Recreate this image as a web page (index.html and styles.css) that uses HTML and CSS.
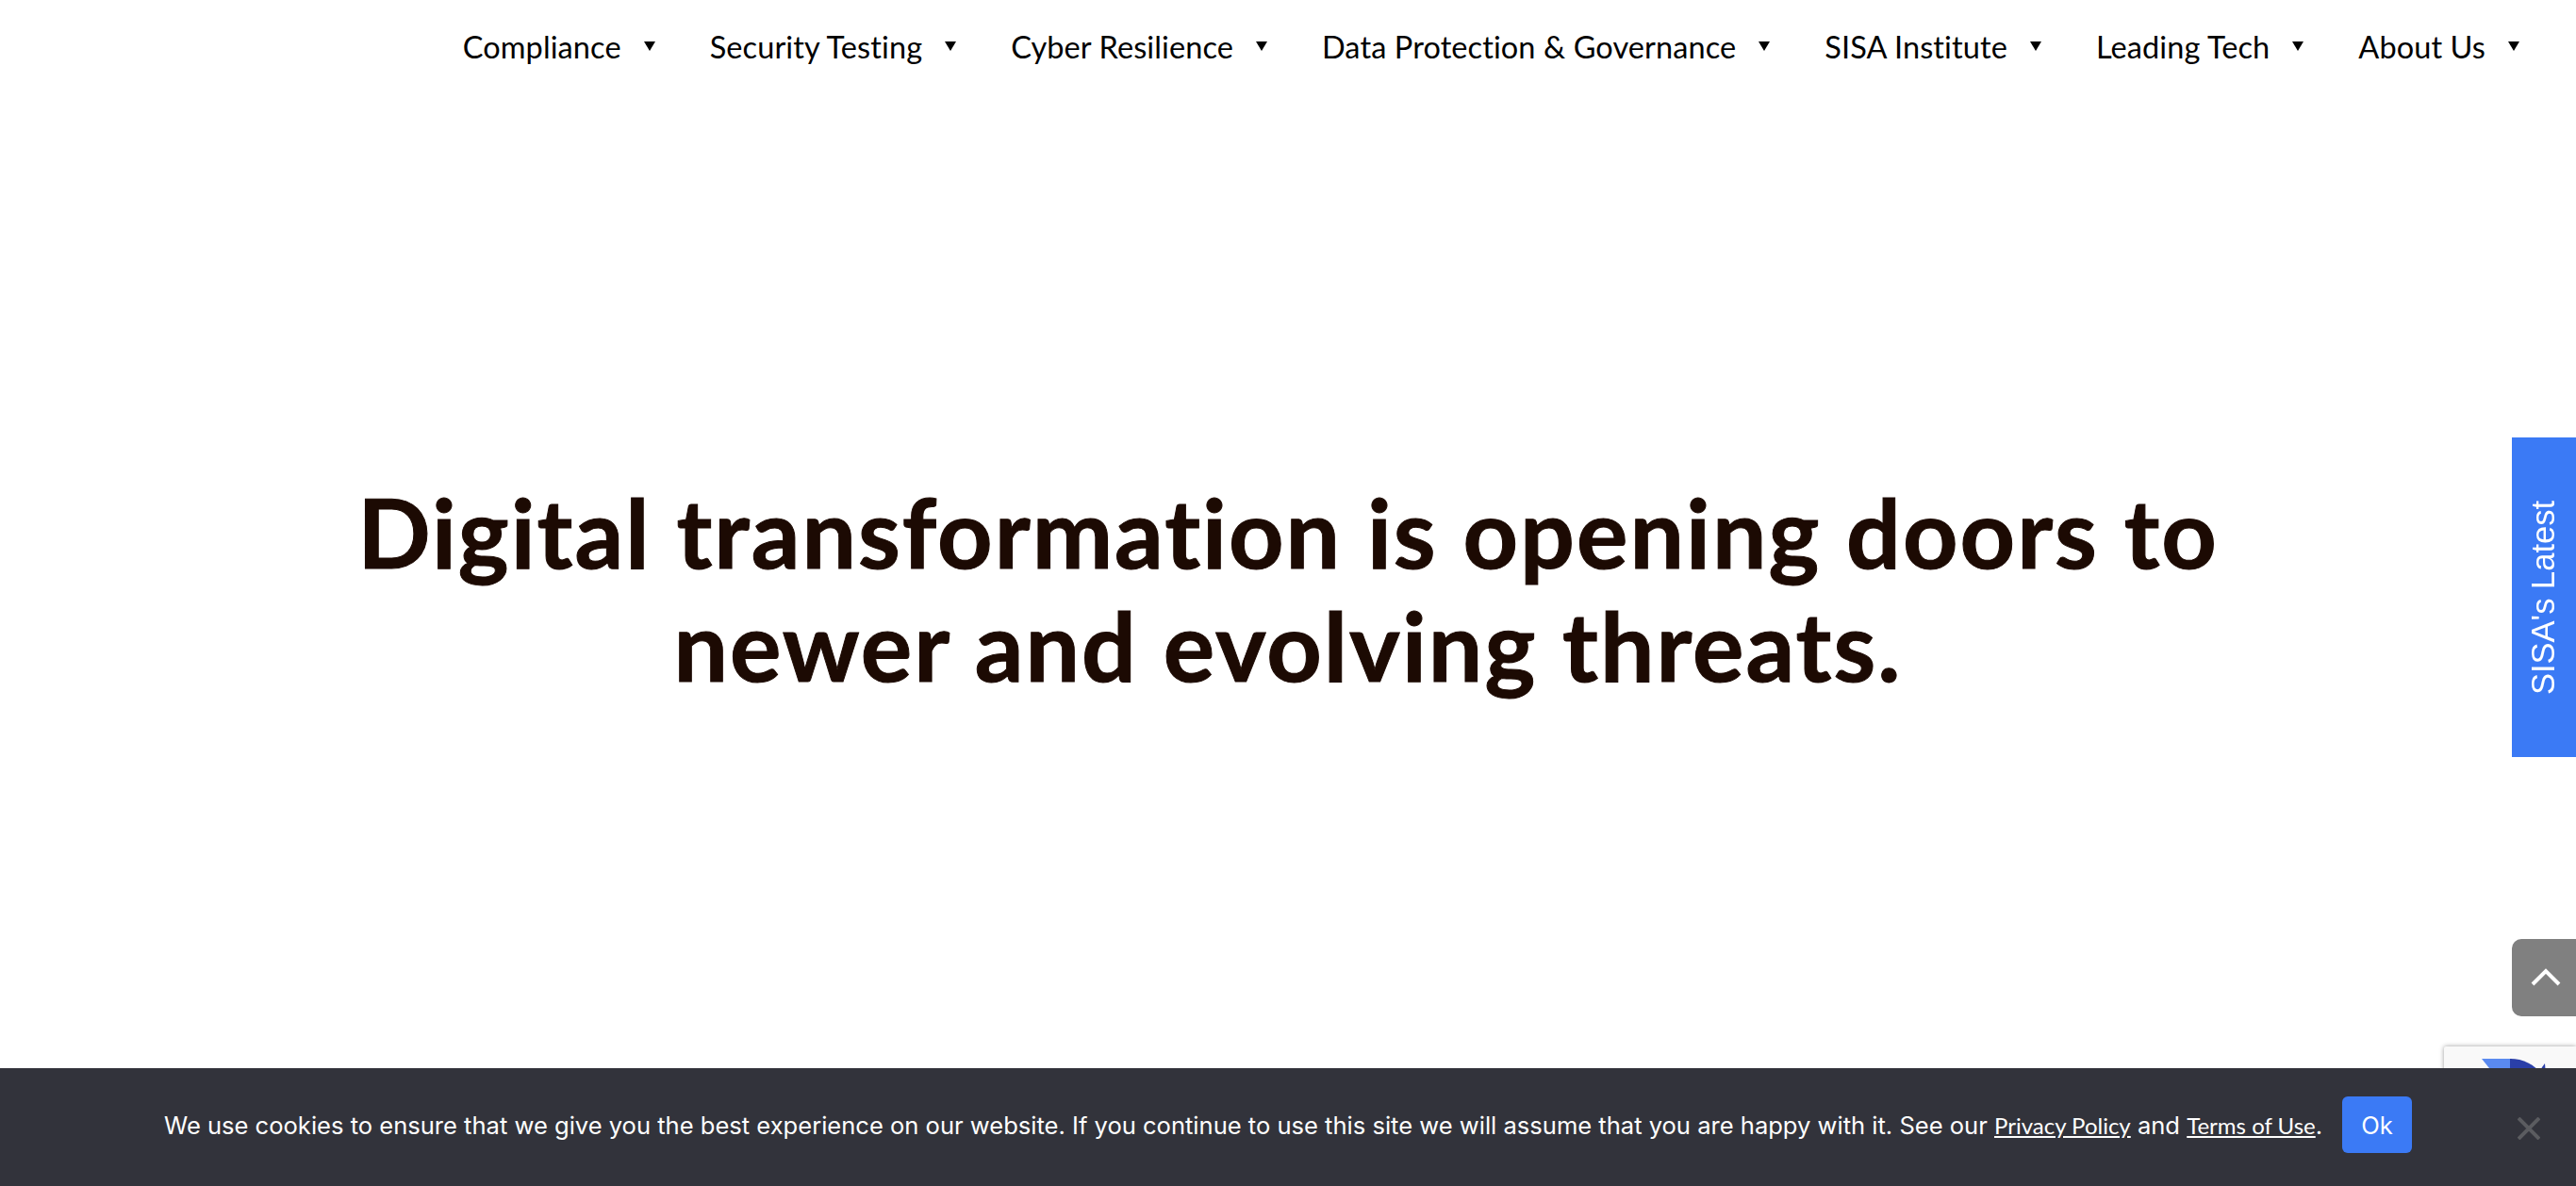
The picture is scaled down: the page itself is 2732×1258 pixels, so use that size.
FILE: index.html
```html
<!DOCTYPE html>
<html lang="en">
<head>
  <meta charset="UTF-8" />
  <title>SISA</title>
  <link rel="stylesheet" href="styles.css">
</head>
<body>
  <nav class="main-nav">
    <a href="#" class="nav-item">Compliance</a>
    <a href="#" class="nav-item">Security Testing</a>
    <a href="#" class="nav-item">Cyber Resilience</a>
    <a href="#" class="nav-item">Data Protection &amp; Governance</a>
    <a href="#" class="nav-item">SISA Institute</a>
    <a href="#" class="nav-item">Leading Tech</a>
    <a href="#" class="nav-item">About Us</a>
  </nav>

  <main class="hero">
    <h1>Digital transformation is opening doors to<br>newer and evolving threats.</h1>
  </main>

  <a href="#" class="side-tab">SISA's Latest</a>

  <a href="#" class="to-top" aria-label="Back to top">
    <svg width="32" height="20" viewBox="0 0 32 20"><path d="M2 17 16 3l14 14" fill="none" stroke="#fff" stroke-width="4"/></svg>
  </a>

  <div class="recaptcha">
    <svg width="70" height="40" viewBox="0 0 70 40">
      <path d="M0 0h32v40H32z" fill="#5a8af0"/>
      <path d="M30 0c14 0 26 6 34 17L30 40z" fill="#2a3fa8"/>
      <path d="M64 9l3-4 1 12H60z" fill="#2a3fa8"/>
    </svg>
  </div>

  <div class="cookie-bar">
    <p>We use cookies to ensure that we give you the best experience on our website. If you continue to use this site we will assume that you are happy with it. See our <a href="#">Privacy Policy</a> and <a href="#">Terms of Use</a>.</p>
    <button class="btn-ok">Ok</button>
    <svg class="cookie-close" width="24" height="24" viewBox="0 0 24 24"><path d="M1 1l22 22M23 1 1 23" stroke="#5b5c60" stroke-width="4"/></svg>
  </div>
</body>
</html>
```

FILE: styles.css
```css
html, body { height: 100%; }
body {
  margin: 0;
  background: #fff;
  font-family: "Lato", sans-serif;
  font-variant-ligatures: none;
  color: #000;
  overflow: hidden;
}

/* Top navigation */
.main-nav {
  display: flex;
  justify-content: flex-end;
  gap: 58px;
  height: 98px;
  padding-right: 60px;
  align-items: center;
}
.nav-item {
  display: flex;
  align-items: center;
  gap: 24px;
  font-size: 32.5px;
  letter-spacing: 0.1px;
  color: #000;
  text-decoration: none;
}
.nav-item::after {
  content: "";
  border-left: 6px solid transparent;
  border-right: 6px solid transparent;
  border-top: 10px solid #000;
}

.hero {
  display: flex;
  justify-content: center;
  padding-top: 406px;
}
h1 {
  margin: 0;
  font-size: 102px;
  line-height: 120px;
  letter-spacing: 2px;
  font-weight: 700;
  -webkit-text-stroke: 1px #1c0a03;
  text-align: center;
  color: #1c0a03;
}

.side-tab {
  position: fixed;
  top: 464px;
  right: 0;
  width: 68px;
  height: 339px;
  display: flex;
  align-items: center;
  justify-content: center;
  background: #3b7af5;
  color: #fff;
  font-family: "Liberation Sans", sans-serif;
  font-size: 34.5px;
  text-decoration: none;
  writing-mode: vertical-rl;
  transform: rotate(180deg);
}

.to-top {
  position: fixed;
  top: 996px;
  right: 0;
  width: 64px;
  height: 82px;
  padding-left: 4px;
  display: flex;
  align-items: center;
  justify-content: center;
  background: #808080;
  border-radius: 10px 0 0 10px;
}

.recaptcha {
  position: fixed;
  top: 1110px;
  right: 0;
  width: 140px;
  height: 60px;
  padding: 13px 0 0 40px;
  box-sizing: border-box;
  background: #f9f9f9;
  box-shadow: 0 0 5px rgba(0, 0, 0, 0.4);
  border-radius: 2px 0 0 0;
}

.cookie-bar {
  position: fixed;
  left: 0;
  right: 0;
  bottom: 0;
  height: 125px;
  display: flex;
  align-items: center;
  padding: 0 0 5px 174px;
  box-sizing: border-box;
  background: #32333b;
  color: #fff;
  font-family: "Inter", sans-serif;
  font-size: 25.55px;
}
.cookie-bar p { margin: 0; white-space: nowrap; }
.cookie-bar a {
  color: #fff;
  font-family: "Lato", sans-serif;
  font-size: 24px;
}
.btn-ok {
  margin-left: 21px;
  width: 74px;
  height: 60px;
  border: none;
  border-radius: 6px;
  background: #3b7af5;
  color: #fff;
  font-family: inherit;
  font-size: 25.6px;
}
.cookie-close { margin: 8px 0 0 112px; }
```
